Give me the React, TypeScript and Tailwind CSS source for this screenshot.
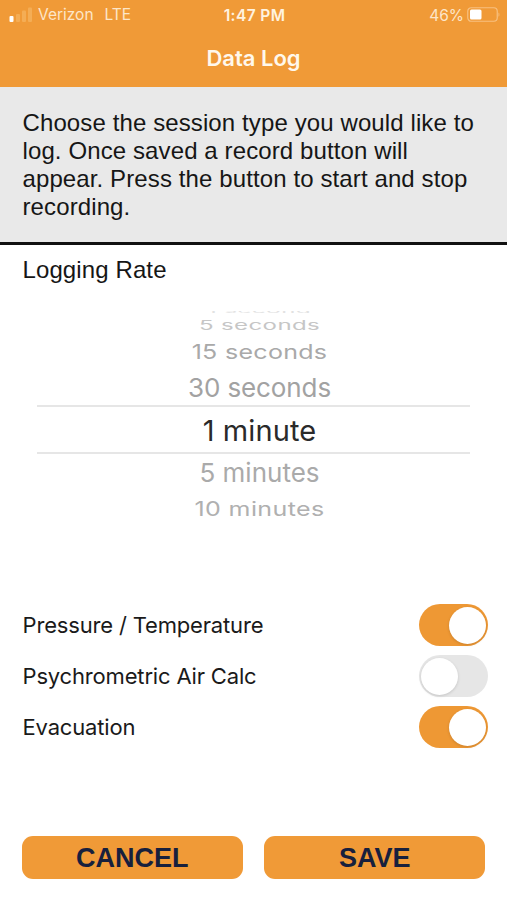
import { useState } from 'react'

// wheel rows: height of the row, size/squash of the text as it rolls away
const rates = [
    { label: '1 second', row: 'h-[12px] pl-[11px]', text: 'text-[24px] tracking-[0.5px] scale-y-[0.28] text-[#e2e2e2] [clip-path:inset(50%_0_0_0)]' },
    { label: '5 seconds', row: 'h-[16px] pt-[2px] pl-[12px]', text: 'text-[24px] tracking-[0.4px] scale-y-[0.54] text-[#c6c6c6]' },
    { label: '15 seconds', row: 'h-[38px] pl-[12px]', text: 'text-[25px] tracking-[0.3px] scale-y-[0.8] text-[#a9a9a9]' },
    { label: '30 seconds', row: 'h-[34px] pl-[12px]', text: 'text-[26px] tracking-[-0.1px] text-[#a2a2a2]' },
    { label: '1 minute', row: 'h-[49px] mx-[37px] border-y-2 border-[#e6e6e6] pt-[2px] pl-[12px]', text: 'text-[29px] tracking-[0.1px] text-[#2a2a2a]' },
    { label: '5 minutes', row: 'h-[36px] pt-[1px] pl-[12px]', text: 'text-[26px] text-[#aaaaaa]' },
    { label: '10 minutes', row: 'h-[36px] pt-[2px] pl-[12px]', text: 'text-[25px] tracking-[0.4px] scale-y-[0.8] text-[#b0b0b0]' },
]

const StatusBar = () => (
    <div className="flex h-[30px] items-center pl-[9px] pr-[7px] text-[15.5px] text-[#fde6c8]">
        <div className="flex flex-1 items-center">
            <svg width="24" height="16" viewBox="0 0 24 16" fill="#f4ad55">
                <rect x="0.5" y="9" width="4" height="6" rx="1" fill="#fff" />
                <rect x="7" y="7" width="4" height="8" rx="1" />
                <rect x="13" y="3.5" width="4" height="11.5" rx="1" />
                <rect x="19" y="0.5" width="4" height="14.5" rx="1" />
            </svg>
            <span className="ml-[5px]">Verizon</span>
            <span className="ml-[11px]">LTE</span>
        </div>
        <span className="pt-[1px] font-semibold tracking-[0.4px] text-[#fff3e0]">1:47 PM</span>
        <div className="flex flex-1 items-center justify-end">
            <span className="pt-[1px]">46%</span>
            <svg className="ml-[3px]" width="33" height="16" viewBox="0 0 33 16" fill="none">
                <rect x="0.75" y="0.75" width="29.5" height="13.5" rx="3.5" stroke="#f7c080" strokeWidth="1.2" />
                <rect x="3" y="2.5" width="11.5" height="10" rx="1.5" fill="#fff" />
                <path d="M31.5 5.5c1.2.7 1.2 3.6 0 4.3z" fill="#f7c080" />
            </svg>
        </div>
    </div>
)

const Toggle = ({ on, onClick }: { on: boolean; onClick: () => void }) => (
    <button
        role="switch"
        aria-checked={on}
        onClick={onClick}
        className={`flex h-[42px] w-[69px] items-center rounded-full px-[2px] ${on ? 'justify-end bg-[#ee9834]' : 'justify-start bg-[#e6e6e6]'}`}
    >
        <span className="size-[37px] rounded-full bg-white shadow-[0_1px_3px_rgba(0,0,0,0.15)]" />
    </button>
)

function App() {
    const [sessions, setSessions] = useState([
        { name: 'Pressure / Temperature', on: true },
        { name: 'Psychrometric Air Calc', on: false },
        { name: 'Evacuation', on: true },
    ])

    const toggle = (index: number) =>
        setSessions(sessions.map((s, i) => (i === index ? { ...s, on: !s.on } : s)))

    return (
        <div className="flex h-[900px] w-[507px] flex-col overflow-hidden bg-white font-['Inter',sans-serif]">
            <header className="h-[87px] shrink-0 bg-[#f09a37]">
                <StatusBar />
                <h1 className="pt-[11px] text-center text-[22px] leading-[34px] font-semibold text-[#fff8ec]">Data Log</h1>
            </header>

            <p className="h-[158px] shrink-0 border-b-[3px] border-[#111] bg-[#e9e9e9] pt-[22px] pl-[22.5px] font-['Liberation_Sans',sans-serif] text-[24px] leading-[28px] tracking-[0.11px] text-[#161616]">
                Choose the session type you would like to<br />
                log. Once saved a record button will<br />
                appear. Press the button to start and stop<br />
                recording.
            </p>

            <h2 className="h-[60px] shrink-0 pt-[10px] pl-[22.5px] font-['Liberation_Sans',sans-serif] text-[24px] leading-[30px] tracking-[0.11px] text-[#161616]">
                Logging Rate
            </h2>

            <div className="flex h-[294px] shrink-0 flex-col">
                {rates.map((rate) => (
                    <div key={rate.label} className={`flex shrink-0 items-center justify-center ${rate.row}`}>
                        <span className={`leading-none whitespace-nowrap ${rate.text}`}>{rate.label}</span>
                    </div>
                ))}
            </div>

            <ul className="flex shrink-0 flex-col gap-[9px] pt-[5px] pr-[19px] pl-[22.5px]">
                {sessions.map((session, i) => (
                    <li key={session.name} className="flex h-[42px] items-center justify-between text-[22px] tracking-[-0.17px] text-[#1a1a1a]">
                        {session.name}
                        <Toggle on={session.on} onClick={() => toggle(i)} />
                    </li>
                ))}
            </ul>

            <div className="mt-auto mb-[21px] flex gap-[21px] pr-[22px] pl-[22px] font-['Liberation_Sans',sans-serif] text-[27px] font-bold text-[#17203d]">
                <button className="h-[43px] flex-1 rounded-[11px] bg-[#f09a37] pt-[2px]">CANCEL</button>
                <button className="h-[43px] flex-1 rounded-[11px] bg-[#f09a37] pt-[2px] pl-[1px]">SAVE</button>
            </div>
        </div>
    )
}

export default App
